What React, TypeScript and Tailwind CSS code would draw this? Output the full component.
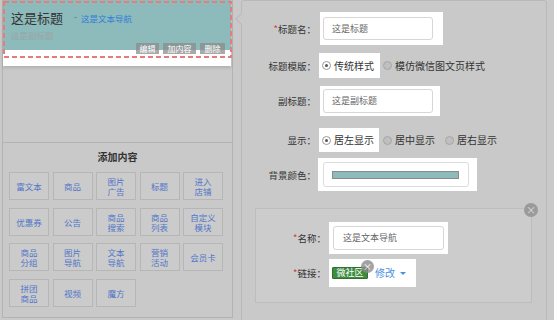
import React from "react";

function Radio({ checked, dim, label }: { checked?: boolean; dim?: boolean; label: string }) {
  return (
    <div className="flex items-center">
      <div
        className={
          dim
            ? "w-[9px] h-[9px] rounded-full border border-[#a6a6a6] bg-[#bfbfbf] flex items-center justify-center"
            : "w-[9px] h-[9px] rounded-full border border-[#9a9a9a] bg-white flex items-center justify-center"
        }
      >
        {checked ? <div className="w-[3px] h-[3px] rounded-full bg-[#555]" /> : null}
      </div>
      <span className="ml-[3px] text-[10px] leading-[12px] text-[#333]">{label}</span>
    </div>
  );
}

const items: string[] = [
  "富文本",
  "商品",
  "图片\n广告",
  "标题",
  "进入\n店铺",
  "优惠券",
  "公告",
  "商品\n搜索",
  "商品\n列表",
  "自定义\n模块",
  "商品\n分组",
  "图片\n导航",
  "文本\n导航",
  "营销\n活动",
  "会员卡",
  "拼团\n商品",
  "视频",
  "魔方",
];

export default function App() {
  return (
    <div className="w-[554px] h-[320px] bg-[#c9c9c9] flex overflow-hidden text-[#333] font-['Noto_Sans_CJK_SC',sans-serif]">
      {/* Left column */}
      <div className="ml-[2px] w-[231px] shrink-0 flex flex-col">
        <div className="h-[143px] border-x border-b border-[#b3b3b3]">
          <div className="relative mr-[1px] h-[66px] bg-white shadow-[0_2px_3px_rgba(0,0,0,0.12)]">
            <div className="h-[50px] bg-[#8dbaba] pl-[8px]">
              <div className="flex items-center pt-[10px]">
                <span className="text-[13px] leading-[15px] text-[#333]">这是标题</span>
                <span className="ml-[11px] w-[3px] h-[1px] bg-[#7a8f8f]" />
                <span className="ml-[4px] text-[8.5px] leading-[12px] text-[#2f7fd8]">这是文本导航</span>
              </div>
              <div className="mt-[5px] text-[8.5px] leading-[10px] text-[#98a6a6]">这是副标题</div>
            </div>
            <svg className="absolute left-0 top-0" width="229" height="59">
              <rect x="1" y="2" width="227" height="55" fill="none" stroke="#e67c7c" strokeWidth="2" strokeDasharray="5 3" />
            </svg>
            <div className="absolute right-[6px] top-[43px] flex gap-[4px]">
              <div className="w-[23px] h-[11px] bg-[rgba(140,140,140,0.75)] text-white text-[8px] leading-[11px] text-center">编辑</div>
              <div className="w-[33px] h-[11px] bg-[rgba(140,140,140,0.75)] text-white text-[8px] leading-[11px] text-center">加内容</div>
              <div className="w-[25px] h-[11px] bg-[rgba(140,140,140,0.75)] text-white text-[8px] leading-[11px] text-center">删除</div>
            </div>
          </div>
        </div>
        <div className="h-[175px] border-x border-b border-[#b3b3b3] pl-[6px]">
          <div className="pt-[8px] text-center text-[10px] leading-[12px] font-bold text-[#333] pr-[6px]">添加内容</div>
          <div className="mt-[9px] grid grid-cols-[repeat(5,40px)] auto-rows-[28px] gap-x-[3.5px] gap-y-[7.5px]">
            {items.map((t) => (
              <div
                key={t}
                className="border border-[#b6b6b6] bg-[#cbcbcb] flex items-center justify-center text-center whitespace-pre-line text-[8.5px] leading-[10px] text-[#5276c8]"
              >
                {t}
              </div>
            ))}
          </div>
        </div>
      </div>

      {/* Right panel */}
      <div className="ml-[8px] w-[306px] h-[330px] shrink-0 border border-[#b9b9b9] rounded-[3px] relative flex flex-col">
        <div className="absolute left-[-5px] top-[14px] w-[8px] h-[8px] rotate-45 border-l border-b border-[#b9b9b9] bg-[#c9c9c9]" />

        {/* 标题名 */}
        <div className="mt-[11px] flex items-center">
          <div className="w-[74px] text-right text-[9.5px] leading-[12px]">
            <span className="text-[#d23b3b]">*</span>标题名：
          </div>
          <div className="ml-[4px] bg-white pl-[3px] pr-[10px] py-[5px]">
            <div className="w-[110px] h-[23px] border border-[#d6d6d6] rounded-[3px] flex items-center pl-[8px] text-[9px] text-[#666]">这是标题</div>
          </div>
        </div>

        {/* 标题模版 */}
        <div className="mt-[8px] flex items-center">
          <div className="w-[74px] text-right text-[9.5px] leading-[12px]">标题模版：</div>
          <div className="ml-[3px] h-[25px] bg-white pl-[3px] pr-[6px] flex items-center">
            <Radio checked label="传统样式" />
          </div>
          <div className="ml-[3px]">
            <Radio dim label="模仿微信图文页样式" />
          </div>
        </div>

        {/* 副标题 */}
        <div className="mt-[8px] flex items-center">
          <div className="w-[74px] text-right text-[9.5px] leading-[12px]">副标题：</div>
          <div className="ml-[4px] bg-white pl-[3px] pr-[7px] py-[3px]">
            <div className="w-[110px] h-[24px] border border-[#d6d6d6] rounded-[3px] flex items-center pl-[8px] text-[9px] text-[#666]">这是副标题</div>
          </div>
        </div>

        {/* 显示 */}
        <div className="mt-[12px] flex items-center">
          <div className="w-[74px] text-right text-[9.5px] leading-[12px]">显示：</div>
          <div className="ml-[3px] h-[24px] bg-white pl-[3px] pr-[5px] flex items-center">
            <Radio checked label="居左显示" />
          </div>
          <div className="ml-[4px]">
            <Radio dim label="居中显示" />
          </div>
          <div className="ml-[10px]">
            <Radio dim label="居右显示" />
          </div>
        </div>

        {/* 背景颜色 */}
        <div className="mt-[6px] flex items-center">
          <div className="w-[74px] text-right text-[9.5px] leading-[12px]">背景颜色：</div>
          <div className="ml-[2px] bg-white pl-[5px] pr-[8px] py-[4px]">
            <div className="w-[146px] h-[25px] border border-[#dcdcdc] rounded-[3px] flex items-center pl-[8px]">
              <div className="w-[127px] h-[8px] border border-[#8a8a8a] bg-[#8dbaba]" />
            </div>
          </div>
        </div>

        {/* Nested nav item box */}
        <div className="mt-[17px] ml-[13px] w-[277px] h-[95px] border border-[#bdbdbd] bg-[#cccccc] relative flex flex-col">
          <div className="absolute top-[-6px] right-[-7px] w-[14px] h-[14px] rounded-full bg-[#9a9a9a] flex items-center justify-center text-[10px] leading-[10px] text-[#dedede]">×</div>

          <div className="mt-[13px] flex items-center">
            <div className="w-[70px] text-right text-[9.5px] leading-[12px]">
              <span className="text-[#d23b3b]">*</span>名称：
            </div>
            <div className="ml-[3px] bg-white p-[4px]">
              <div className="w-[111px] h-[24px] border border-[#d6d6d6] rounded-[3px] flex items-center pl-[9px] text-[9px] text-[#666]">这是文本导航</div>
            </div>
          </div>

          <div className="mt-[5px] flex items-center">
            <div className="w-[70px] text-right text-[9.5px] leading-[12px]">
              <span className="text-[#d23b3b]">*</span>链接：
            </div>
            <div className="ml-[3px] h-[28px] bg-white pl-[3px] pr-[10px] flex items-center">
              <div className="relative w-[36px] h-[12px] bg-[#3f8c3f] border border-[#2f6f2f] rounded-[1px] flex items-center justify-center text-[9px] leading-[10px] text-white">
                微社区
                <div className="absolute right-[-7px] top-[-8px] w-[13px] h-[13px] rounded-full bg-[rgba(140,140,140,0.8)] flex items-center justify-center text-[9px] leading-[9px] text-white">×</div>
              </div>
              <span className="ml-[7px] text-[10px] leading-[12px] text-[#4a8fe2]">修改</span>
              <span className="ml-[5px] w-0 h-0 border-x-[3px] border-x-transparent border-t-[3px] border-t-[#4a8fe2]" />
            </div>
          </div>
        </div>
      </div>
    </div>
  );
}
